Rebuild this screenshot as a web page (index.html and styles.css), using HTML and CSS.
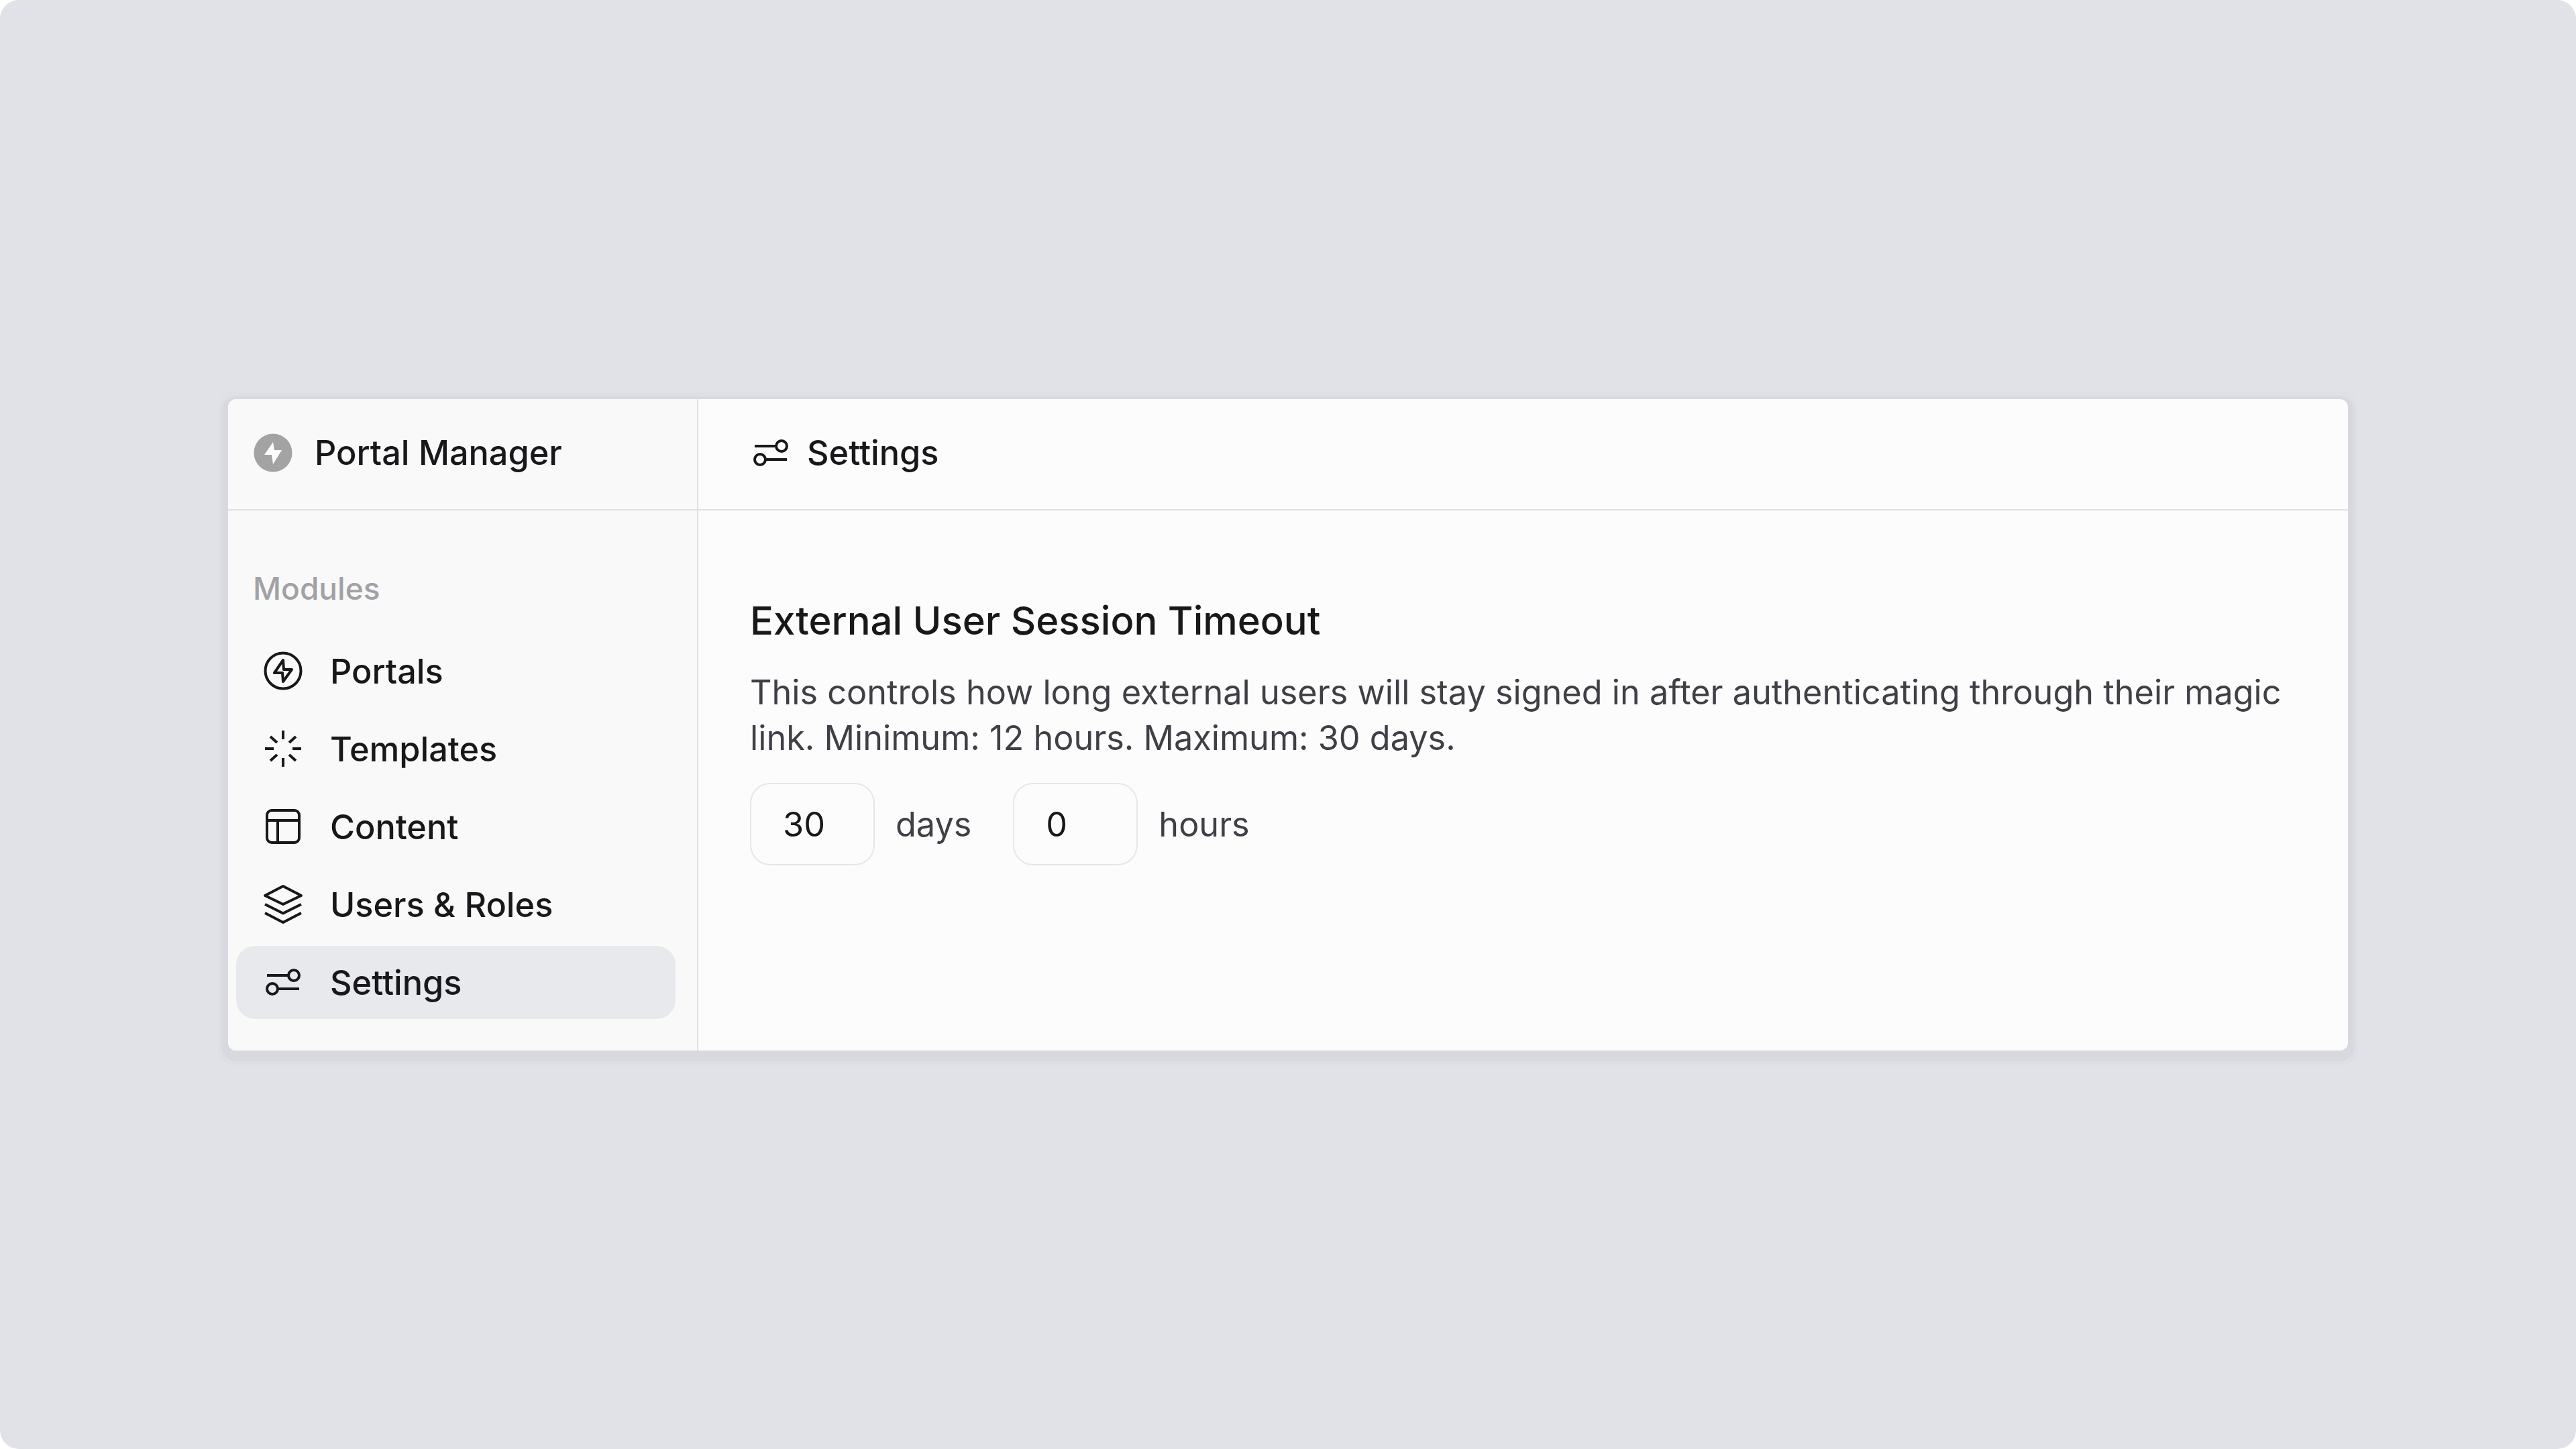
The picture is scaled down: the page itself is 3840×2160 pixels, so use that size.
FILE: index.html
```html
<!DOCTYPE html>
<html lang="en">
<head>
    <meta charset="UTF-8">
    <title>Portal Manager - Settings</title>
    <link rel="stylesheet" href="styles.css">
</head>
<body>

    <div class="window">

        <!-- Sidebar -->
        <aside class="sidebar">
            <div class="brand">
                <svg class="logo" viewBox="-30 -30 60 60">
                    <circle r="28.5" fill="#a3a3a3"/>
                    <path d="M0 -16 L-13 3 H-2 L0 17 L13 -4 H2 Z" fill="#fcfcfc"/>
                </svg>
                <span>Portal Manager</span>
            </div>
            <div class="modules">
                <div class="modules-label">Modules</div>
                <nav class="nav">
                    <a class="nav-item">
                        <svg class="icon" viewBox="-30 -30 60 60">
                            <circle r="26.5"/>
                            <path d="M0 -16 L-13 3 H-1 L0 16 L13 -2 H1 Z"/>
                        </svg>
                        Portals
                    </a>
                    <a class="nav-item">
                        <svg class="icon" viewBox="-30 -30 60 60">
                            <path d="M0 -27 V-14 M0 14 V27 M-27 0 H-14 M14 0 H27 M-19 -18 L-9 -9 M19 18 L9 9 M19 -18 L9 -9 M-19 18 L-9 9"/>
                        </svg>
                        Templates
                    </a>
                    <a class="nav-item">
                        <svg class="icon" viewBox="-30 -30 60 60">
                            <rect x="-24" y="-24" width="48" height="48" rx="7"/>
                            <path d="M-24 -9 H24 M-8 -9 V24"/>
                        </svg>
                        Content
                    </a>
                    <a class="nav-item">
                        <svg class="icon" viewBox="-30 -30 60 60">
                            <path d="M0 -27 L27 -13 L0 0 L-27 -13 Z M-27 0 L0 13.5 L27 0 M-27 13 L0 27 L27 13"/>
                        </svg>
                        Users &amp; Roles
                    </a>
                    <a class="nav-item active">
                        <svg class="icon" viewBox="-30 -30 60 60">
                            <circle cx="16" cy="-10" r="8"/>
                            <circle cx="-16" cy="10" r="8"/>
                            <path d="M-24 -10 H8 M-8 10 H24"/>
                        </svg>
                        Settings
                    </a>
                </nav>
            </div>
        </aside>

        <!-- Contenu principal -->
        <main class="main">
            <header class="topbar">
                <svg class="icon" viewBox="-30 -30 60 60">
                    <circle cx="16" cy="-10" r="8"/>
                    <circle cx="-16" cy="10" r="8"/>
                    <path d="M-24 -10 H8 M-8 10 H24"/>
                </svg>
                <span>Settings</span>
            </header>
            <section class="panel">
                <h2 class="panel-title">External User Session Timeout</h2>
                <p class="panel-text">This controls how long external users will stay signed in after authenticating through their magic link. Minimum: 12 hours. Maximum: 30 days.</p>
                <div class="timeout">
                    <input class="timeout-input" type="text" value="30">
                    <span class="timeout-unit">days</span>
                    <input class="timeout-input" type="text" value="0">
                    <span class="timeout-unit">hours</span>
                </div>
            </section>
        </main>

    </div>

</body>
</html>
```

FILE: styles.css
```css
html {
    background-color: #fff;
}
body {
    font-family: Inter, "Liberation Sans", sans-serif;
    background-color: #e0e2e7;
    color: #18181b;
    margin: 0;
    height: 100vh;
    border-radius: 28px;
    display: flex;
    align-items: center;
    justify-content: center;
}
.window {
    width: 3160px;
    height: 971px;
    display: flex;
    background-color: #fcfcfc;
    border-radius: 12px;
    box-shadow: 0 6px 0 10px rgba(0, 0, 0, 0.025), 0 6px 3px 17px rgba(0, 0, 0, 0.01);
    overflow: hidden;
}
.sidebar {
    width: 699px;
    flex-shrink: 0;
    background-color: #f9f9f9;
    border-right: 2px solid #dfe0e5;
}
.brand {
    height: 166px;
    box-sizing: border-box;
    display: flex;
    align-items: center;
    gap: 32px;
    padding: 0 0 4px 37px;
    border-bottom: 2px solid #dfe0e5;
    font-size: 50.4px;
    font-weight: 500;
}
.logo {
    width: 60px;
    height: 60px;
}
.icon {
    width: 60px;
    height: 60px;
    flex-shrink: 0;
    fill: none;
    stroke: #18181b;
    stroke-width: 4;
    stroke-linejoin: round;
}
.modules {
    padding: 0 32px 0 12px;
}
.modules-label {
    margin-top: 88px;
    padding-left: 25px;
    font-size: 46.08px;
    font-weight: 500;
    line-height: 56px;
    color: #a1a1a6;
}
.nav {
    margin-top: 41px;
    display: flex;
    flex-direction: column;
    gap: 7px;
}
.nav-item {
    height: 109px;
    display: flex;
    align-items: center;
    gap: 40px;
    padding-left: 40px;
    border-radius: 28px;
    font-size: 50.4px;
    font-weight: 500;
}
.nav-item.active {
    background-color: #e8e9ec;
}
.main {
    flex: 1;
}
.topbar {
    height: 166px;
    box-sizing: border-box;
    display: flex;
    align-items: center;
    gap: 24px;
    padding: 0 0 4px 78px;
    border-bottom: 2px solid #dfe0e5;
    font-size: 50.4px;
    font-weight: 500;
}
.panel {
    padding: 129px 77px 0;
}
.panel-title {
    margin: 0;
    font-size: 58px;
    font-weight: 500;
    line-height: 70px;
}
.panel-text {
    margin: 38px 0 0;
    font-size: 50.4px;
    line-height: 68px;
    color: #3f3f46;
}
.timeout {
    margin-top: 33px;
    display: flex;
    align-items: center;
}
.timeout-input {
    width: 186px;
    height: 123px;
    box-sizing: border-box;
    padding: 0 0 0 47px;
    font-family: inherit;
    font-size: 50.4px;
    color: #18181b;
    background-color: #fcfcfc;
    border: 2px solid #e6e7eb;
    border-radius: 30px;
    outline: none;
}
.timeout-unit {
    margin: 0 62px 0 31px;
    font-size: 50.4px;
    color: #3f3f46;
}
```
